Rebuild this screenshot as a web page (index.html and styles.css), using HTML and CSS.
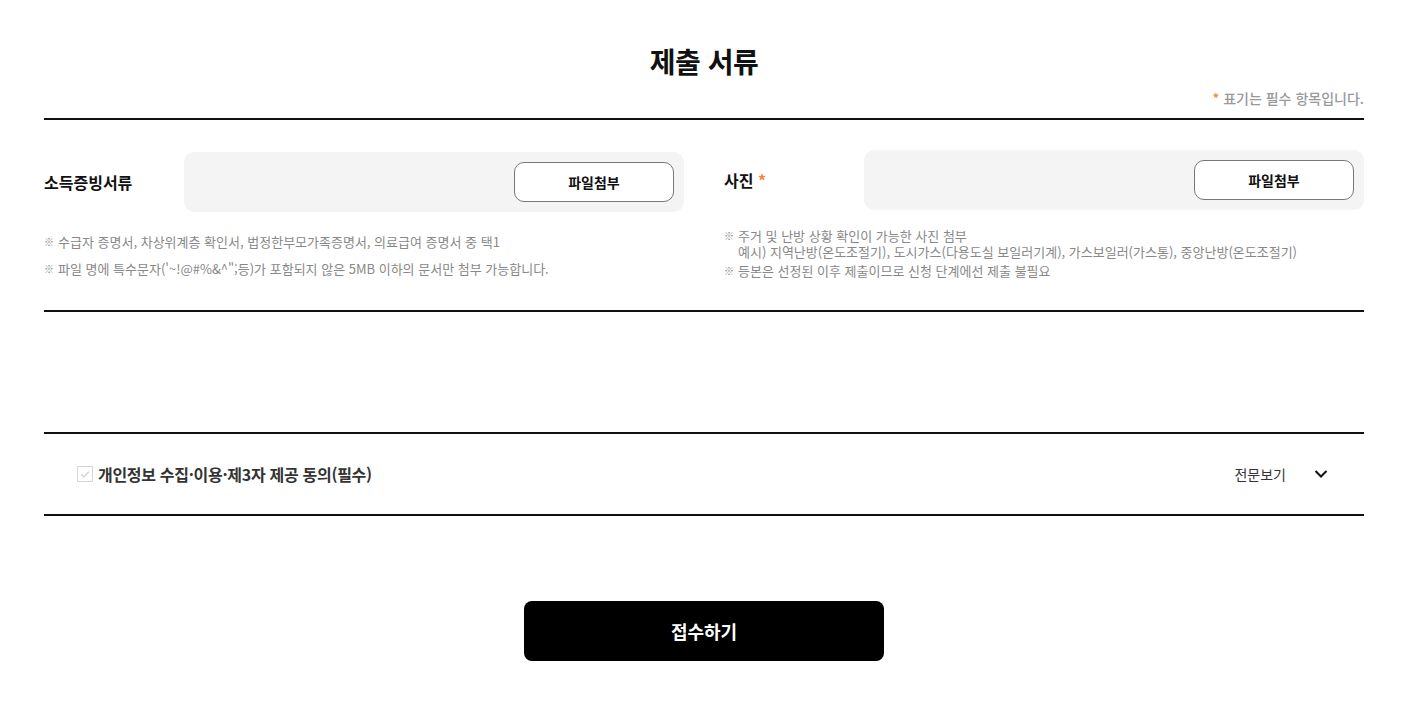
FILE: index.html
```html
<!DOCTYPE html>
<html lang="ko">
<head>
<meta charset="utf-8">
<link rel="stylesheet" href="styles.css">
</head>
<body>
<div class="wrap">
  <h2 class="title">제출 서류</h2>
  <p class="req-note"><span class="star">*</span> 표기는 필수 항목입니다.</p>
  <section class="docs">
    <div class="col col-left">
      <div class="field">
        <div class="label">소득증빙서류</div>
        <div class="filebox"><button class="btn-file" type="button">파일첨부</button></div>
      </div>
      <ul class="notes notes-left">
        <li>수급자 증명서, 차상위계층 확인서, 법정한부모가족증명서, 의료급여 증명서 중 택1</li>
        <li>파일 명에 특수문자('~!@#%&amp;^";등)가 포함되지 않은 5MB 이하의 문서만 첨부 가능합니다.</li>
      </ul>
    </div>
    <div class="col col-right">
      <div class="field">
        <div class="label">사진 <span class="star">*</span></div>
        <div class="filebox"><button class="btn-file" type="button">파일첨부</button></div>
      </div>
      <ul class="notes notes-right">
        <li>주거 및 난방 상황 확인이 가능한 사진 첨부<br>예시) 지역난방(온도조절기), 도시가스(다용도실 보일러기계), 가스보일러(가스통), 중앙난방(온도조절기)</li>
        <li>등본은 선정된 이후 제출이므로 신청 단계에선 제출 불필요</li>
      </ul>
    </div>
  </section>
  <div class="spacer"></div>
  <section class="agree">
    <label class="agree-check">
      <span class="cb"><svg width="16" height="16" viewBox="0 0 16 16"><rect x="0.5" y="0.5" width="15" height="15" fill="#fff" stroke="#d6d6d6"/><path d="M4 8.2l2.8 2.6L12 5.6" fill="none" stroke="#d0d0d0" stroke-width="1.3"/></svg></span>
      <span class="agree-text">개인정보 수집·이용·제3자 제공 동의(필수)</span>
    </label>
    <button class="more" type="button">전문보기
      <svg width="14" height="10" viewBox="0 0 14 10"><path d="M1.5 2l5.5 5.5L12.5 2" fill="none" stroke="#111" stroke-width="2"/></svg>
    </button>
  </section>
  <div class="submit-row">
    <button class="btn-submit" type="button">접수하기</button>
  </div>
</div>
</body>
</html>
```

FILE: styles.css
```css
* { box-sizing: border-box; }
body {
  margin: 0;
  background: #fff;
  font-family: "Noto Sans CJK KR", "Noto Sans", sans-serif;
  color: #111;
}
.wrap {
  width: 1320px;
  margin-left: 44px;
  padding-top: 40px;
}
.title {
  margin: 0;
  text-align: center;
  font-size: 28px;
  font-weight: 700;
  line-height: 42px;
  letter-spacing: -0.5px;
}
.req-note {
  margin: 5px 0 0;
  text-align: right;
  font-size: 14px;
  line-height: 22px;
  color: #999;
  font-weight: 500;
  padding-bottom: 9px;
  border-bottom: 2px solid #111;
}
.star { color: #f0873c; }
.docs {
  display: grid;
  grid-template-columns: 640px 640px;
  column-gap: 40px;
  padding-top: 32px;
  border-bottom: 2px solid #111;
  height: 192px;
}
.field {
  display: flex;
  align-items: center;
}
.label {
  width: 140px;
  font-size: 16px;
  font-weight: 700;
}
.filebox {
  flex: 1;
  height: 60px;
  background: #f4f4f4;
  border-radius: 10px;
  display: flex;
  align-items: center;
  justify-content: flex-end;
  padding-right: 10px;
}
.btn-file {
  width: 160px;
  height: 40px;
  background: #fff;
  border: 1px solid #777;
  border-radius: 10px;
  font-family: inherit;
  font-size: 14px;
  font-weight: 700;
  color: #111;
}
.col-right { margin-top: -2px; }
.notes {
  list-style: none;
  margin: 0;
  padding: 0;
  font-size: 13px;
  color: #888;
}
.notes li {
  position: relative;
  padding-left: 14px;
}
.notes li::before {
  content: "※";
  position: absolute;
  left: 0;
  top: 0;
  font-size: 10px;
}
.notes-left { margin-top: 20px; }
.notes-left li { line-height: 20px; margin-bottom: 7px; }
.notes-right { margin-top: 18px; }
.notes-right li { line-height: 16px; margin-bottom: 3px; }
.spacer {
  height: 122px;
  border-bottom: 2px solid #111;
}
.agree {
  display: flex;
  align-items: center;
  justify-content: space-between;
  height: 82px;
  padding: 0 36px 0 33px;
  border-bottom: 2px solid #111;
}
.agree-check {
  display: flex;
  align-items: center;
  gap: 5px;
}
.cb { display: flex; }
.agree-text {
  font-size: 16px;
  font-weight: 700;
  color: #333;
  letter-spacing: -0.3px;
}
.more {
  display: flex;
  align-items: center;
  gap: 28px;
  border: 0;
  background: none;
  font-family: inherit;
  font-size: 14px;
  color: #333;
  padding: 0;
}
.submit-row {
  display: flex;
  justify-content: center;
  padding-top: 85px;
}
.btn-submit {
  width: 360px;
  height: 60px;
  background: #000;
  color: #fff;
  border: 0;
  border-radius: 8px;
  font-family: inherit;
  font-size: 18px;
  font-weight: 700;
}
```
